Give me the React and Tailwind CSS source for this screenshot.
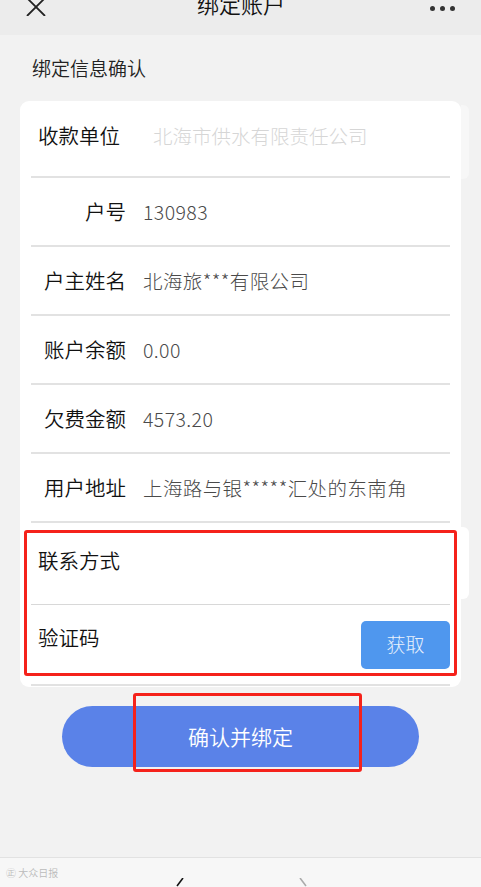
import { useState } from 'react';

const rows = [
  { label: '户号', value: '130983' },
  { label: '户主姓名', value: '北海旅***有限公司' },
  { label: '账户余额', value: '0.00' },
  { label: '欠费金额', value: '4573.20' },
  { label: '用户地址', value: '上海路与银*****汇处的东南角' },
];

const font = { fontFamily: '"PingFang SC", "Noto Sans CJK SC", sans-serif' };

export default function App() {
  const [phone, setPhone] = useState('');
  const [code, setCode] = useState('');

  return (
    <div className="w-[481px] h-[887px] bg-[#f2f2f2] overflow-hidden flex flex-col font-[350]" style={font}>
      {/* 顶部导航 */}
      <div className="h-[35px] bg-[#ececec] flex items-start justify-between px-[26px] shrink-0">
        <svg width="20" height="18" viewBox="0 0 20 18" className="-mt-[2px]">
          <path d="M1 0 L19 18 M19 0 L1 18" stroke="#222" strokeWidth="1.8" fill="none" />
        </svg>
        <div className="text-[22px] leading-[22px] -mt-[8px] text-[#111] ml-[6px]">绑定账户</div>
        <div className="flex gap-[5px] mt-[6px]">
          <span className="w-[5px] h-[5px] rounded-full bg-[#333]" />
          <span className="w-[5px] h-[5px] rounded-full bg-[#333]" />
          <span className="w-[5px] h-[5px] rounded-full bg-[#333]" />
        </div>
      </div>

      <div className="px-[32px] pt-[21px] h-[66px] text-[19px] leading-[24px] text-[#222] shrink-0">绑定信息确认</div>

      {/* 信息卡片 */}
      <div className="relative mx-[20px] bg-white rounded-[9px] px-[11px] shrink-0">
        <div className="absolute right-[-8px] top-[4px] w-[8px] h-[74px] bg-[#f7f7f7] rounded-r-[6px]" />
        <div className="absolute right-[-8px] top-[426px] w-[8px] h-[72px] bg-white rounded-r-[6px]" />

        <div className="h-[77px] flex items-center border-b-2 border-[#e2e2e2]">
          <div className="w-[95px] pl-[7px] text-[20.5px] text-[#111] -mt-[6px]">收款单位</div>
          <div className="ml-[27px] text-[19.5px] font-light text-[#d6d6d6] -mt-[6px]">北海市供水有限责任公司</div>
        </div>

        {rows.map((r) => (
          <div key={r.label} className="h-[69px] flex items-center border-b-2 border-[#e2e2e2]">
            <div className="w-[95px] text-right text-[20.5px] text-[#111]">{r.label}</div>
            <div className="ml-[17px] text-[19.5px] font-light tracking-[0.4px] text-[#4a4a4a]">{r.value}</div>
          </div>
        ))}

        <div className="h-[82px] flex items-start pt-[22px] border-b border-[#d8d8d8]">
          <div className="w-[95px] pl-[7px] text-[20.5px] leading-[30px] text-[#111]">联系方式</div>
          <input
            value={phone}
            onChange={(e) => setPhone(e.target.value)}
            className="flex-1 ml-[17px] outline-none bg-transparent text-[19px]"
          />
        </div>

        <div className="h-[81px] flex items-center border-b-2 border-[#e2e2e2]">
          <div className="w-[95px] pl-[7px] text-[20.5px] text-[#111] -mt-[14px]">验证码</div>
          <input
            value={code}
            onChange={(e) => setCode(e.target.value)}
            className="flex-1 min-w-0 ml-[17px] outline-none bg-transparent text-[19px]"
          />
          <button className="w-[89px] h-[48px] rounded-[5px] bg-[#4f97ee] text-[19px] font-light text-[#e8f1fc]">获取</button>
        </div>
        <div className="h-[1px]" />

        {/* 标注红框 */}
        <div className="absolute left-[4px] right-[4px] top-[429px] h-[146px] border-[3px] border-[#f5221b] rounded-[3px]" />
      </div>

      {/* 确认按钮 */}
      <div className="relative mt-[19px] mx-[62px] shrink-0">
        <button className="w-full h-[61px] rounded-full bg-[#5a82e8] text-white text-[21px]">确认并绑定</button>
        <div className="absolute left-[71px] top-[-13px] w-[229px] h-[79px] border-[3px] border-[#f5221b] rounded-[3px]" />
      </div>

      <div className="flex-1" />

      {/* 底部工具栏 */}
      <div className="h-[30px] bg-[#f7f7f7] border-t border-[#e2e2e2] relative shrink-0">
        <div className="absolute left-[6px] top-[9px] text-[10px] text-[#bbb] leading-[12px]">㊣ 大众日报</div>
        <svg width="12" height="14" className="absolute left-[175px] top-[20px]">
          <path d="M8 0 L2 8" stroke="#111" strokeWidth="1.6" fill="none" />
        </svg>
        <svg width="12" height="14" className="absolute left-[298px] top-[20px]">
          <path d="M2 0 L8 8" stroke="#aaa" strokeWidth="1.6" fill="none" />
        </svg>
      </div>
    </div>
  );
}
